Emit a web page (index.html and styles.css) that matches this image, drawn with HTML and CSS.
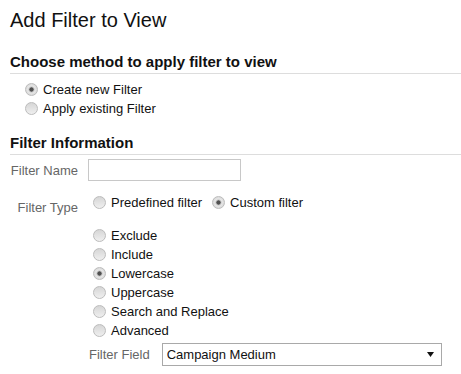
FILE: index.html
```html
<!DOCTYPE html>
<html lang="en">
<head>
  <meta charset="UTF-8" />
  <title>Add Filter to View</title>
  <link rel="stylesheet" href="styles.css">
</head>
<body>
  <div class="page">
    <h1 class="title">Add Filter to View</h1>

    <h2 class="section">Choose method to apply filter to view</h2>
    <div class="choices">
      <label class="option"><input type="radio" name="method" checked> Create new Filter</label>
      <label class="option"><input type="radio" name="method"> Apply existing Filter</label>
    </div>

    <h2 class="section section-info">Filter Information</h2>
    <div class="form">
      <label class="form-label" for="filterName">Filter Name</label>
      <input class="text-input" type="text" id="filterName" />

      <div class="form-label type-label">Filter Type</div>
      <div class="controls">
        <div class="type-row">
          <label class="option"><input type="radio" name="type"> Predefined filter</label>
          <label class="option"><input type="radio" name="type" checked> Custom filter</label>
        </div>
        <div class="sub-list">
          <label class="option"><input type="radio" name="custom"> Exclude</label>
          <label class="option"><input type="radio" name="custom"> Include</label>
          <label class="option"><input type="radio" name="custom" checked> Lowercase</label>
          <label class="option"><input type="radio" name="custom"> Uppercase</label>
          <label class="option"><input type="radio" name="custom"> Search and Replace</label>
          <label class="option"><input type="radio" name="custom"> Advanced</label>
        </div>
        <div class="field-row">
          <span class="field-label">Filter Field</span>
          <div class="select">
            <span>Campaign Medium</span>
            <svg width="7" height="5" viewBox="0 0 7 5"><path d="M0 0h7L3.5 5z" fill="#111"/></svg>
          </div>
        </div>
      </div>
    </div>
  </div>
</body>
</html>
```

FILE: styles.css
```css
body {
  margin: 0;
  font-family: 'Liberation Sans', Arial, sans-serif;
  font-size: 13px;
  color: #111;
  background: #fff;
}
.page {
  padding: 8px 0 0 10px;
}
.title {
  margin: 0;
  font-size: 20px;
  font-weight: normal;
  line-height: 24px;
  color: #111;
}
.section {
  margin: 21px 0 0;
  padding-bottom: 2px;
  font-size: 15px;
  line-height: 18px;
  font-weight: bold;
  color: #111;
  border-bottom: 1px solid #dddddd;
}
.section-info {
  margin-top: 16px;
}
.choices {
  margin-top: 6px;
  padding-left: 15px;
}
.option {
  display: flex;
  align-items: center;
  gap: 5px;
  height: 19px;
  white-space: nowrap;
}
.option input {
  appearance: none;
  -webkit-appearance: none;
  width: 13px;
  height: 13px;
  margin: 0;
  border: 1px solid #bcbcbc;
  border-radius: 50%;
  background: linear-gradient(#d6d6d6, #efefef);
  box-sizing: border-box;
}
.option input:checked {
  background: radial-gradient(circle, #505050 0 1.8px, #bdbdbd 2.4px, #e6e6e6 3.5px, #d8d8d8 6px);
}
.form {
  display: grid;
  grid-template-columns: 68px auto;
  column-gap: 10px;
  row-gap: 12px;
  margin-top: 4px;
  align-items: start;
}
.form-label {
  text-align: right;
  color: #666;
  white-space: nowrap;
  align-self: center;
}
.type-label {
  align-self: start;
  padding-top: 5px;
  line-height: 19px;
}
.text-input {
  width: 153px;
  height: 22px;
  box-sizing: border-box;
  margin: 0;
  border: 1px solid #c8c8c8;
  font: inherit;
}
.controls {
  padding-left: 5px;
}
.type-row {
  display: flex;
  gap: 10px;
}
.sub-list {
  margin-top: 14px;
}
.field-row {
  display: flex;
  align-items: center;
  gap: 12px;
  margin-top: 3px;
  margin-left: -4px;
}
.field-label {
  color: #666;
}
.select {
  display: flex;
  justify-content: space-between;
  align-items: center;
  width: 280px;
  height: 23px;
  box-sizing: border-box;
  padding: 0 7px 0 4px;
  border: 1px solid #a9a9a9;
  color: #111;
}
```
